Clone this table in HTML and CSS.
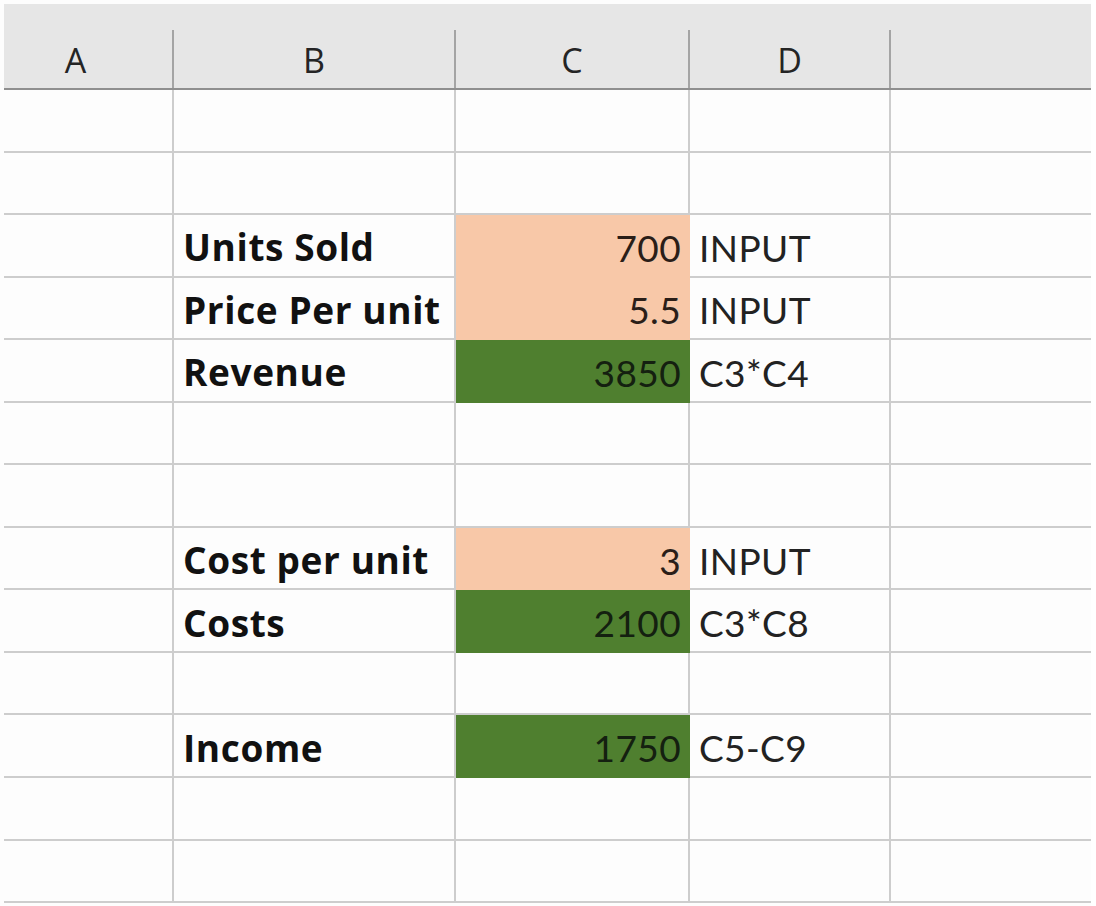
FILE: index.html
```html
<!DOCTYPE html>
<html>
<head>
<meta charset="utf-8">
<link rel="stylesheet" href="styles.css">
</head>
<body>
<div class="sheet">
  <div class="head">
    <div class="hc first">A</div>
    <div class="hc">B</div>
    <div class="hc">C</div>
    <div class="hc">D</div>
    <div class="hc last"></div>
  </div>
  <div class="grid">
    <div class="c"></div><div class="c"></div><div class="c"></div><div class="c"></div><div class="c e"></div>
    <div class="c"></div><div class="c"></div><div class="c"></div><div class="c"></div><div class="c e"></div>

    <div class="c"></div><div class="c lbl">Units Sold</div><div class="c num peach">700</div><div class="c txt">INPUT</div><div class="c e"></div>
    <div class="c"></div><div class="c lbl">Price Per unit</div><div class="c num peach">5.5</div><div class="c txt">INPUT</div><div class="c e"></div>
    <div class="c"></div><div class="c lbl">Revenue</div><div class="c num green">3850</div><div class="c txt">C3*C4</div><div class="c e"></div>

    <div class="c"></div><div class="c"></div><div class="c"></div><div class="c"></div><div class="c e"></div>
    <div class="c"></div><div class="c"></div><div class="c"></div><div class="c"></div><div class="c e"></div>

    <div class="c"></div><div class="c lbl">Cost per unit</div><div class="c num peach">3</div><div class="c txt">INPUT</div><div class="c e"></div>
    <div class="c"></div><div class="c lbl">Costs</div><div class="c num green">2100</div><div class="c txt">C3*C8</div><div class="c e"></div>

    <div class="c"></div><div class="c"></div><div class="c"></div><div class="c"></div><div class="c e"></div>

    <div class="c"></div><div class="c lbl">Income</div><div class="c num green">1750</div><div class="c txt">C5-C9</div><div class="c e"></div>

    <div class="c"></div><div class="c"></div><div class="c"></div><div class="c"></div><div class="c e"></div>
    <div class="c"></div><div class="c"></div><div class="c"></div><div class="c"></div><div class="c e"></div>
  </div>
</div>
</body>
</html>
```

FILE: styles.css
```css
html, body {
  margin: 0;
  padding: 0;
  background: #ffffff;
}
.sheet {
  width: 1087px;
  height: 902px;
  padding: 4px 0 0 4px;
  overflow: hidden;
  background: #fdfdfd;
}
.head {
  display: grid;
  grid-template-columns: 170px 282px 234px 201px 200px;
  background: #e6e6e6;
  padding-top: 26px;
  border-bottom: 2px solid #8f8f8f;
}
.hc {
  height: 58px;
  box-sizing: border-box;
  border-right: 2px solid #a4a4a4;
  display: flex;
  align-items: center;
  justify-content: center;
  font-family: "Open Sans", "Noto Sans", sans-serif;
  font-size: 34px;
  font-weight: 500;
  color: #242424;
  padding-top: 2px;
}
.hc.first {
  padding-right: 25px;
}
.hc.last {
  border-right: none;
}
.grid {
  display: grid;
  grid-template-columns: 170px 282px 234px 201px 200px;
  grid-auto-rows: 62.55px;
  background: #fdfdfd;
}
.c {
  box-sizing: border-box;
  border-right: 2px solid #cdcdcd;
  border-bottom: 2px solid #cdcdcd;
  display: flex;
  align-items: center;
  font-family: "Lato", "Liberation Sans", sans-serif;
  font-size: 37px;
  letter-spacing: 0.4px;
  color: #151515;
  padding-top: 4px;
  white-space: nowrap;
}
.c.e {
  border-right: none;
}
.lbl {
  font-family: "Open Sans", "Lato", sans-serif;
  font-weight: 700;
  font-size: 37px;
  letter-spacing: 0.6px;
  padding-left: 9px;
  padding-top: 3px;
  color: #111111;
}
.num {
  justify-content: flex-end;
  padding-right: 7px;
}
.txt {
  padding-left: 9px;
  color: #222222;
}
.peach {
  background: #f8c8a8;
  border-color: #f8c8a8;
  color: #2a1e18;
}
.green {
  background: #4f7f2f;
  border-color: #4f7f2f;
  color: #142010;
}
```
